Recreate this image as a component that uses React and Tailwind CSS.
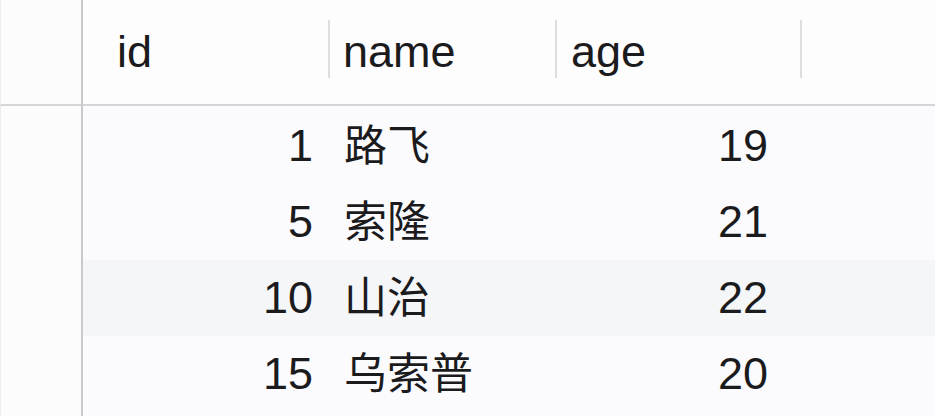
export default function App() {
  const rows = [
    { id: 1, name: "路飞", age: 19 },
    { id: 5, name: "索隆", age: 21 },
    { id: 10, name: "山治", age: 22 },
    { id: 15, name: "乌索普", age: 20 },
  ];
  const font = { fontFamily: '"Liberation Sans", "Noto Sans CJK SC", sans-serif' };
  return (
    <div
      className="flex w-[935px] h-[416px] overflow-hidden bg-[#fbfbfd] text-[45px] text-[#1b1b1d]"
      style={font}
    >
      <div className="w-[83px] shrink-0 flex flex-col border-r-2 border-[#c9c9cb] bg-[#fcfcfd]">
        <div className="h-[106px] shrink-0 border-b-2 border-[#d6d6d8] border-l border-l-[#eeeeef]" />
        <div className="flex-1 border-l border-l-[#eeeeef]" />
      </div>
      <div className="flex-1 flex flex-col">
        <div className="h-[106px] shrink-0 flex items-center border-b-2 border-[#d6d6d8] bg-[#fdfdfe] leading-[104px]">
          <div className="w-[245px] shrink-0 pl-[34px]">id</div>
          <div className="w-[2px] h-[58px] shrink-0 bg-[#dedee0] -mt-[6px]" />
          <div className="w-[225px] shrink-0 pl-[13px]">name</div>
          <div className="w-[2px] h-[58px] shrink-0 bg-[#dedee0] -mt-[6px]" />
          <div className="w-[243px] shrink-0 pl-[14px]">age</div>
          <div className="w-[2px] h-[58px] shrink-0 bg-[#dedee0] -mt-[6px]" />
          <div className="flex-1" />
        </div>
        <div className="flex flex-col pt-[2px]">
          {rows.map((r, i) => (
            <div
              key={r.id}
              className={
                "h-[76px] flex items-center leading-[76px] " +
                (i === 2 ? "bg-[#f5f6f8]" : "bg-[#fbfbfd]")
              }
            >
              <div className="w-[247px] shrink-0 pr-[17px] text-right">{r.id}</div>
              <div className="w-[227px] shrink-0 pl-[14px] text-[43px]">{r.name}</div>
              <div className="w-[245px] shrink-0 pr-[34px] text-right">{r.age}</div>
              <div className="flex-1" />
            </div>
          ))}
        </div>
      </div>
    </div>
  );
}
